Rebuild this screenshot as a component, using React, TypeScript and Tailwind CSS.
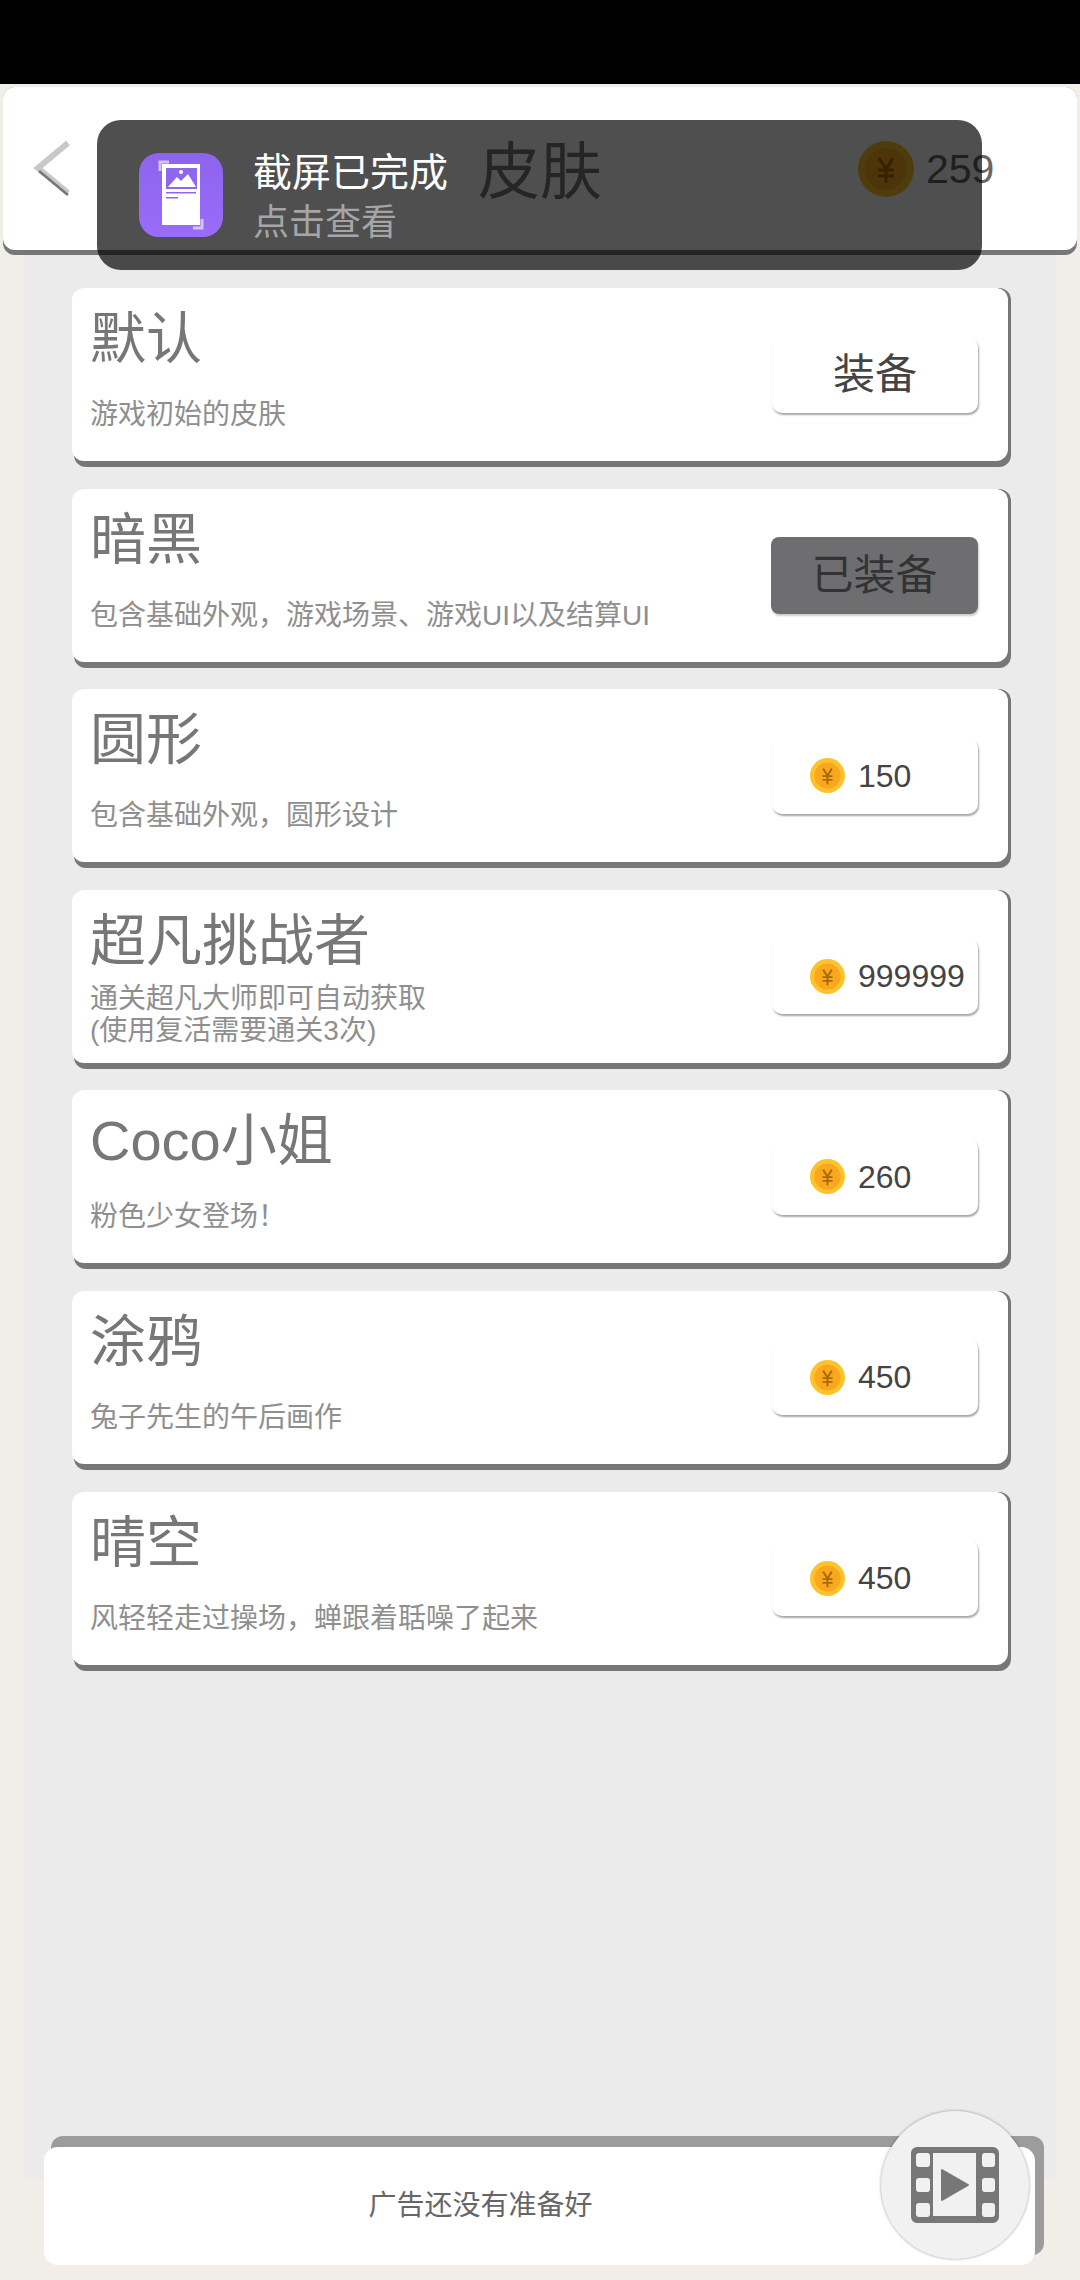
const cjk = "font-['Liberation_Sans','Noto_Sans_CJK_SC',sans-serif]";

const skins = [
  { name: "默认", desc: ["游戏初始的皮肤"], state: "equip" },
  { name: "暗黑", desc: ["包含基础外观，游戏场景、游戏UI以及结算UI"], state: "equipped" },
  { name: "圆形", desc: ["包含基础外观，圆形设计"], price: "150" },
  { name: "超凡挑战者", desc: ["通关超凡大师即可自动获取", "(使用复活需要通关3次)"], price: "999999" },
  { name: "Coco小姐", desc: ["粉色少女登场！"], price: "260" },
  { name: "涂鸦", desc: ["兔子先生的午后画作"], price: "450" },
  { name: "晴空", desc: ["风轻轻走过操场，蝉跟着聒噪了起来"], price: "450" },
];

function Coin({ big }: { big?: boolean }) {
  return (
    <svg viewBox="0 0 56 56" className={big ? "w-[56px] h-[56px]" : "w-[35px] h-[35px]"}>
      <circle cx="28" cy="28" r="28" fill="#fdc32c" />
      <circle cx="28" cy="28" r="21" fill="#f9a81d" />
      <path d="M21 17l7 11 7-11M20 29h16M20 35h16M28 28v14" fill="none" stroke="#a8690a" strokeWidth="3" />
    </svg>
  );
}

function SkinCard({ skin }: { skin: (typeof skins)[number] }) {
  const two = skin.desc.length > 1;
  return (
    <div className="h-[179px] shrink-0 rounded-[12px] bg-[#777777] pr-[3px] pb-[6px] ml-[2px]">
      <div className="h-[173px] rounded-[12px] bg-white flex items-center justify-between -ml-[2px] pl-[18px] pr-[30px]">
        <div className="flex flex-col h-full">
          <div className="text-[56px] leading-[70px] h-[70px] mt-[16px] text-[#777777]">{skin.name}</div>
          <div className={two ? "text-[28px] leading-[32px] text-[#8f8f8f] mt-[7px]" : "text-[28px] leading-[32px] text-[#8f8f8f] mt-[25px]"}>
            {skin.desc.map((d) => (
              <div key={d}>{d}</div>
            ))}
          </div>
        </div>
        {skin.state === "equipped" ? (
          <div className="w-[207px] h-[77px] rounded-[8px] bg-[#6e6e70] flex items-center justify-center text-[42px] text-[#333333] shadow-[1px_2px_2px_rgba(0,0,0,0.2)]">
            已装备
          </div>
        ) : (
          <div className={skin.price ? "w-[206px] h-[76px] rounded-[10px] bg-white flex items-center pl-[38px] gap-[13px] text-[#444444] shadow-[1px_2px_2px_rgba(0,0,0,0.35)]" : "w-[206px] h-[76px] rounded-[10px] bg-white flex items-center justify-center text-[#444444] shadow-[1px_2px_2px_rgba(0,0,0,0.35)]"}>
            {skin.price ? (
              <>
                <Coin />
                <span className="text-[32px]">{skin.price}</span>
              </>
            ) : (
              <span className="text-[42px]">装备</span>
            )}
          </div>
        )}
      </div>
    </div>
  );
}

export default function App() {
  return (
    <div className={`relative w-[1080px] h-[2280px] overflow-hidden bg-[#f1eeea] ${cjk}`}>
      <div className="h-[84px] bg-black" />

      <div className="mx-[3px] mt-[3px] h-[168px] rounded-[12px] bg-[#777777] pb-[5px]">
        <div className="h-[163px] rounded-[12px] bg-white flex items-center relative">
          <svg viewBox="0 0 40 56" className="absolute left-[30px] top-[54px] w-[40px] h-[56px]">
            <path d="M35 2 5 27l30 25" fill="none" stroke="#c8c8c8" strokeWidth="6" strokeLinejoin="miter" />
            <path d="M6 30l29 24" fill="none" stroke="#777777" strokeWidth="2.5" />
          </svg>
          <div className="absolute left-[475px] top-[46px] text-[62px] leading-[80px] text-[#777777]">皮肤</div>
          <div className="absolute left-[855px] top-[54px]">
            <Coin big />
          </div>
          <div className="absolute left-[923px] top-[54px] text-[41px] leading-[56px] text-[#666666]">259</div>
        </div>
      </div>

      <div className="mx-[24px] h-[1924px] bg-[#ebebeb] pt-[33px] pl-[48px] pr-[45px] flex flex-col gap-[21.6px]">
        {skins.map((s) => (
          <SkinCard key={s.name} skin={s} />
        ))}
      </div>

      {/* bottom ad bar */}
      <div className="absolute left-[51px] top-[2136px] w-[993px] h-[119px] rounded-[12px] bg-[#9c9c9c]" />
      <div className="absolute left-[44px] top-[2147px] w-[991px] h-[118px] rounded-[14px] bg-white flex items-center justify-center pr-[118px] text-[28px] text-[#666666]">
        广告还没有准备好
      </div>
      <div className="absolute left-[881px] top-[2111px] w-[148px] h-[148px] rounded-full bg-[#f1f1f1] shadow-[0_0_3px_rgba(0,0,0,0.4)] flex items-center justify-center">
        <svg viewBox="0 0 88 76" className="w-[88px] h-[76px]">
          <path
            fillRule="evenodd"
            fill="#777777"
            d="M6 0h76a6 6 0 0 1 6 6v64a6 6 0 0 1-6 6H6a6 6 0 0 1-6-6V6a6 6 0 0 1 6-6ZM22 6v63h43V6ZM8 6a3 3 0 0 0-3 3v8a3 3 0 0 0 3 3h8a3 3 0 0 0 3-3V9a3 3 0 0 0-3-3ZM8 31a3 3 0 0 0-3 3v8a3 3 0 0 0 3 3h8a3 3 0 0 0 3-3v-8a3 3 0 0 0-3-3ZM8 56a3 3 0 0 0-3 3v8a3 3 0 0 0 3 3h8a3 3 0 0 0 3-3v-8a3 3 0 0 0-3-3ZM74 6a3 3 0 0 0-3 3v8a3 3 0 0 0 3 3h7a3 3 0 0 0 3-3V9a3 3 0 0 0-3-3ZM74 31a3 3 0 0 0-3 3v8a3 3 0 0 0 3 3h7a3 3 0 0 0 3-3v-8a3 3 0 0 0-3-3ZM74 56a3 3 0 0 0-3 3v8a3 3 0 0 0 3 3h7a3 3 0 0 0 3-3v-8a3 3 0 0 0-3-3Z"
          />
          <path fill="#777777" stroke="#777777" strokeWidth="2" strokeLinejoin="round" d="M31 23v30l26-15Z" />
        </svg>
      </div>

      {/* screenshot toast */}
      <div className="absolute left-[97px] top-[120px] w-[885px] h-[150px] rounded-[24px] bg-[rgba(0,0,0,0.69)] flex">
        <div className="ml-[42px] mt-[33px] w-[84px] h-[84px] rounded-[20px] bg-gradient-to-b from-[#8d64ee] to-[#9a6cf8]">
          <svg viewBox="0 0 84 84" className="w-[84px] h-[84px]">
            <path d="M21 18V9h9M63 66v9h-9" fill="none" stroke="#d4c4fb" strokeWidth="3" />
            <path fill="#ffffff" d="M23 11h38v61H23z" />
            <path fill="#8f66f0" d="M27 15h31v21H27zM27 39h30v1.5H27zM27 44h12v1.5H27z" />
            <path fill="#ffffff" d="M29 34l9-10 4 4 7-7 8 13zM40 19a2 2 0 1 0 4 0 2 2 0 1 0-4 0" />
          </svg>
        </div>
        <div className="ml-[30px] mt-[28px]">
          <div className="text-[39px] leading-[50px] text-white">截屏已完成</div>
          <div className="text-[36px] leading-[50px] text-[#a5a5a5]">点击查看</div>
        </div>
      </div>
    </div>
  );
}
